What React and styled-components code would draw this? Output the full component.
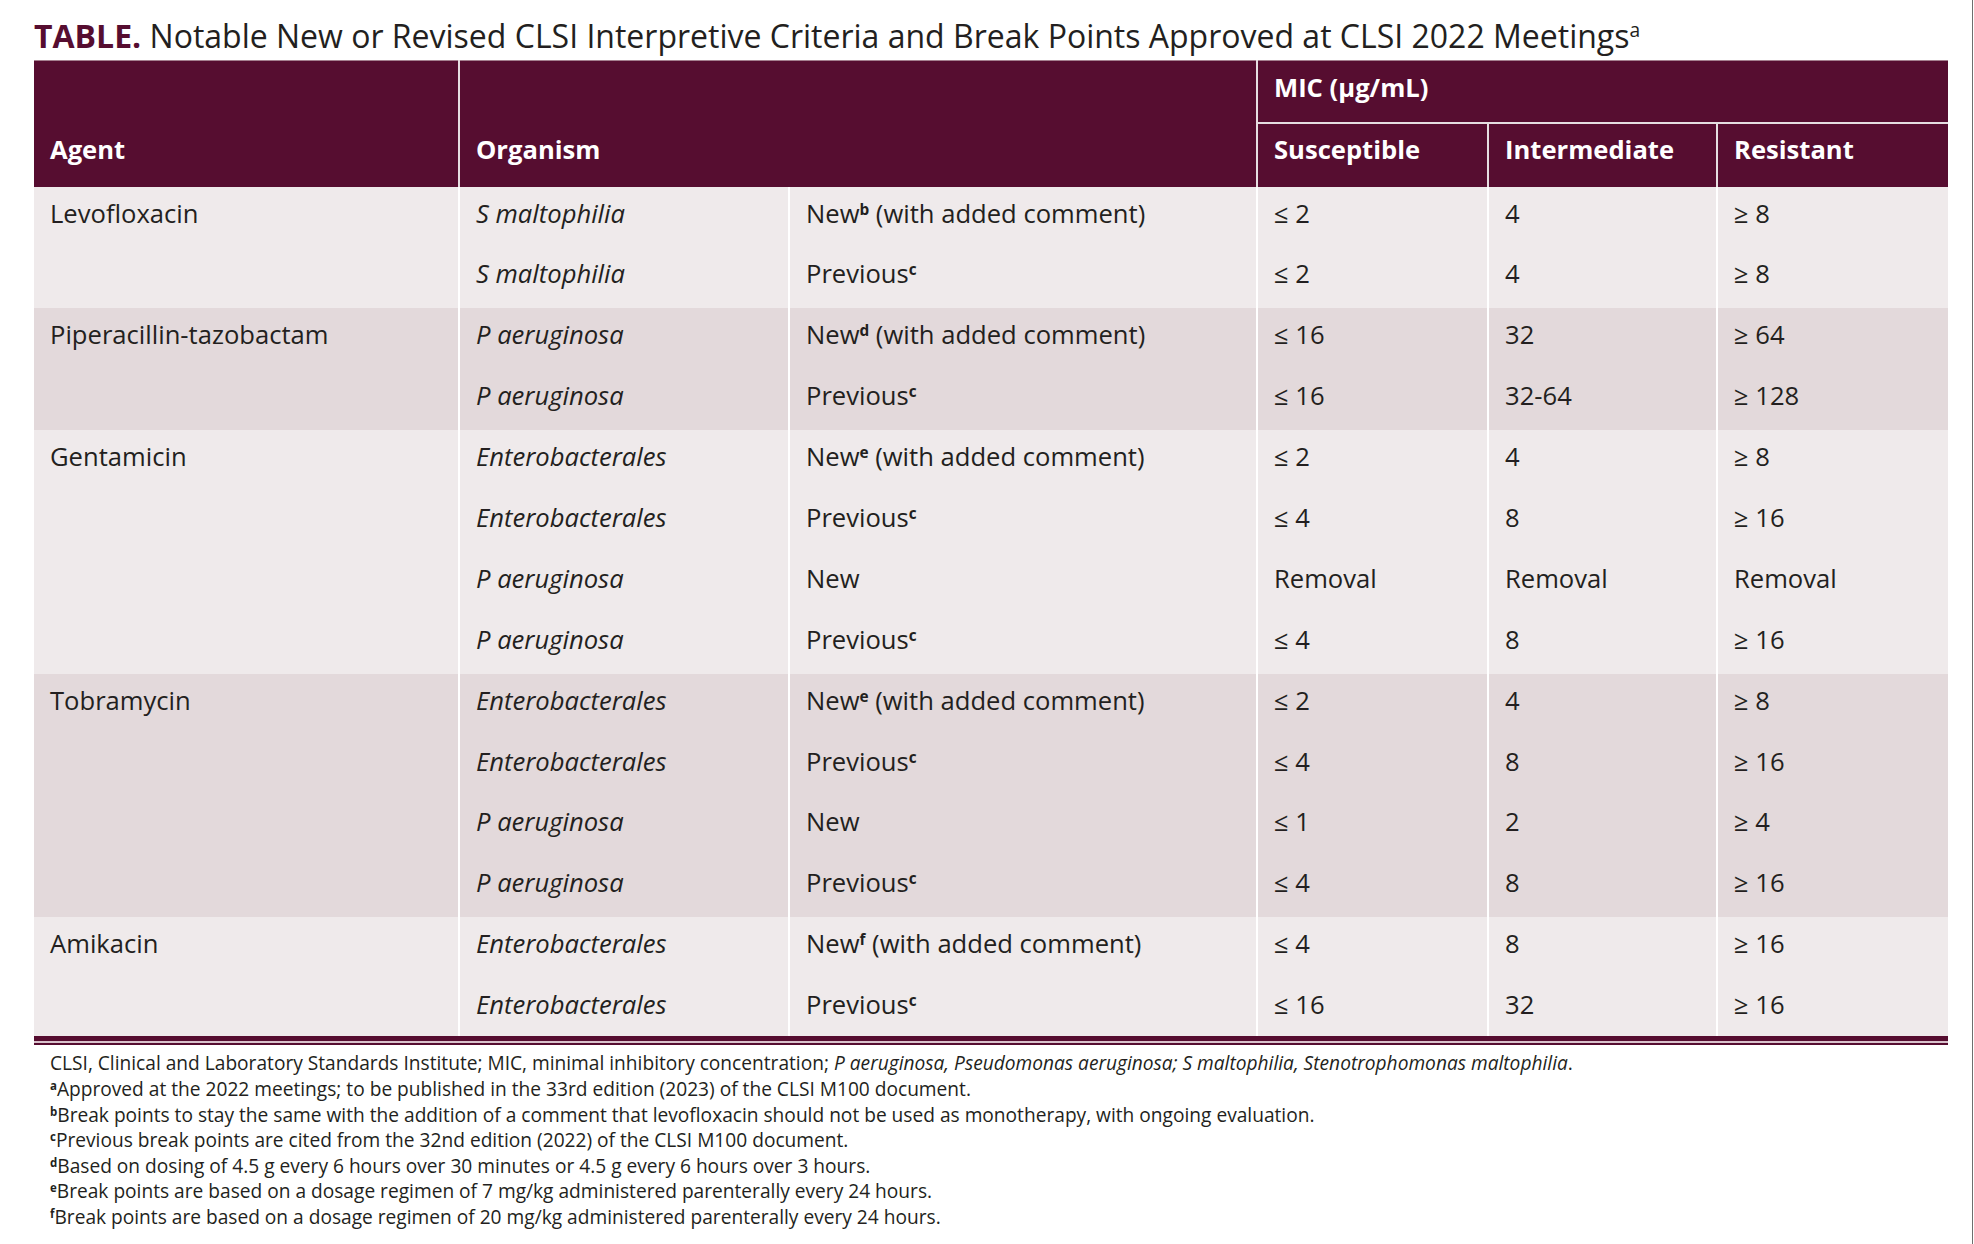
import React from "react";
import styled, { createGlobalStyle } from "styled-components";

const MAROON = "#560d30";
const INK = "#231f20";

const Global = createGlobalStyle`
  html, body { margin: 0; padding: 0; background: #ffffff; }
  body { font-family: "Open Sans", "Liberation Sans", sans-serif; color: ${INK}; }
`;

const Page = styled.div`
  box-sizing: border-box;
  width: 1973px;
  min-height: 1244px;
  border-right: 1px solid #6e6e6e;
  padding: 16px 0 0 34px;
`;

const Title = styled.h1`
  margin: 0 0 4px 0;
  font-size: 32px;
  line-height: 40px;
  font-weight: 400;
  color: ${INK};
  white-space: nowrap;
`;

const TitleLabel = styled.span`
  font-weight: 700;
  color: ${MAROON};
`;

const Sup = styled.sup`
  font-size: 0.6em;
  line-height: 0;
  vertical-align: 0.55em;
  font-weight: ${(p) => (p.$bold ? 700 : 400)};
`;

const Table = styled.table`
  width: 1914px;
  border-collapse: collapse;
  table-layout: fixed;
  font-size: 25.6px;
`;

const HeadRow = styled.tr`
  height: ${(p) => p.$h}px;
  background: ${MAROON};
`;

const Th = styled.th`
  padding: 0 16px ${(p) => p.$pb || 0}px 16px;
  text-align: left;
  font-size: 25.6px;
  font-weight: 700;
  color: #ffffff;
  line-height: 34px;
  vertical-align: ${(p) => p.$valign || "middle"};
  border-left: ${(p) => (p.$noLeft ? "none" : "2px solid #e6dde1")};
  border-bottom: ${(p) => (p.$divider ? "2px solid #e6dde1" : "none")};
  border-top: 1px solid #a5808f;
`;

const BodyRow = styled.tr`
  height: 60.9px;
  background: ${(p) => (p.$dark ? "#e3d9db" : "#efeaeb")};
`;

const Td = styled.td`
  padding: 10px 16px 0 16px;
  vertical-align: top;
  line-height: 34px;
  font-weight: 400;
  font-style: ${(p) => (p.$italic ? "italic" : "normal")};
  color: ${INK};
  border-left: ${(p) => (p.$first ? "none" : "2px solid #ffffff")};
  border-bottom: ${(p) => (p.$last ? `5px solid ${MAROON}` : "none")};
  white-space: nowrap;
`;

const RuleGap = styled.div`
  width: 1914px;
  height: 2px;
  background: #d9c3cc;
`;

const Rule = styled.div`
  width: 1914px;
  height: 2px;
  background: ${MAROON};
`;

const Notes = styled.div`
  padding: 6px 0 0 16px;
  font-size: 19.15px;
  line-height: 25.6px;
  color: ${INK};
`;

const Note = styled.div`
  white-space: nowrap;
`;

const Em = styled.i`
  font-style: italic;
`;

const groups = [
  {
    agent: "Levofloxacin",
    rows: [
      ["S maltophilia", ["New", "b", " (with added comment)"], "≤ 2", "4", "≥ 8"],
      ["S maltophilia", ["Previous", "c", ""], "≤ 2", "4", "≥ 8"],
    ],
  },
  {
    agent: "Piperacillin-tazobactam",
    rows: [
      ["P aeruginosa", ["New", "d", " (with added comment)"], "≤ 16", "32", "≥ 64"],
      ["P aeruginosa", ["Previous", "c", ""], "≤ 16", "32-64", "≥ 128"],
    ],
  },
  {
    agent: "Gentamicin",
    rows: [
      ["Enterobacterales", ["New", "e", " (with added comment)"], "≤ 2", "4", "≥ 8"],
      ["Enterobacterales", ["Previous", "c", ""], "≤ 4", "8", "≥ 16"],
      ["P aeruginosa", ["New", "", ""], "Removal", "Removal", "Removal"],
      ["P aeruginosa", ["Previous", "c", ""], "≤ 4", "8", "≥ 16"],
    ],
  },
  {
    agent: "Tobramycin",
    rows: [
      ["Enterobacterales", ["New", "e", " (with added comment)"], "≤ 2", "4", "≥ 8"],
      ["Enterobacterales", ["Previous", "c", ""], "≤ 4", "8", "≥ 16"],
      ["P aeruginosa", ["New", "", ""], "≤ 1", "2", "≥ 4"],
      ["P aeruginosa", ["Previous", "c", ""], "≤ 4", "8", "≥ 16"],
    ],
  },
  {
    agent: "Amikacin",
    rows: [
      ["Enterobacterales", ["New", "f", " (with added comment)"], "≤ 4", "8", "≥ 16"],
      ["Enterobacterales", ["Previous", "c", ""], "≤ 16", "32", "≥ 16"],
    ],
  },
];

const notes = [
  ["a", "Approved at the 2022 meetings; to be published in the 33rd edition (2023) of the CLSI M100 document."],
  ["b", "Break points to stay the same with the addition of a comment that levofloxacin should not be used as monotherapy, with ongoing evaluation."],
  ["c", "Previous break points are cited from the 32nd edition (2022) of the CLSI M100 document."],
  ["d", "Based on dosing of 4.5 g every 6 hours over 30 minutes or 4.5 g every 6 hours over 3 hours."],
  ["e", "Break points are based on a dosage regimen of 7 mg/kg administered parenterally every 24 hours."],
  ["f", "Break points are based on a dosage regimen of 20 mg/kg administered parenterally every 24 hours."],
];

export default function App() {
  return (
    <>
      <Global />
      <Page>
        <Title>
          <TitleLabel>TABLE.</TitleLabel> Notable New or Revised CLSI Interpretive Criteria and Break Points Approved at CLSI 2022 Meetings
          <Sup>a</Sup>
        </Title>
        <Table>
          <colgroup>
            <col style={{ width: 425 }} />
            <col style={{ width: 330 }} />
            <col style={{ width: 468 }} />
            <col style={{ width: 231 }} />
            <col style={{ width: 229 }} />
            <col style={{ width: 231 }} />
          </colgroup>
          <thead>
            <HeadRow $h={62}>
              <Th rowSpan={2} $noLeft $valign="bottom" $pb={20}>Agent</Th>
              <Th rowSpan={2} colSpan={2} $valign="bottom" $pb={20}>Organism</Th>
              <Th colSpan={3} $divider $pb={6}>MIC (µg/mL)</Th>
            </HeadRow>
            <HeadRow $h={64}>
              <Th $pb={10}>Susceptible</Th>
              <Th $pb={10}>Intermediate</Th>
              <Th $pb={10}>Resistant</Th>
            </HeadRow>
          </thead>
          <tbody>
            {groups.map((g, gi) =>
              g.rows.map((r, ri) => {
                const last = gi === groups.length - 1 && ri === g.rows.length - 1;
                const lastGroup = gi === groups.length - 1;
                return (
                  <BodyRow key={`${gi}-${ri}`} $dark={gi % 2 === 1}>
                    {ri === 0 && (
                      <Td rowSpan={g.rows.length} $first $last={lastGroup}>
                        {g.agent}
                      </Td>
                    )}
                    <Td $italic $last={last}>{r[0]}</Td>
                    <Td $last={last}>
                      {r[1][0]}
                      {r[1][1] && <Sup $bold>{r[1][1]}</Sup>}
                      {r[1][2]}
                    </Td>
                    <Td $last={last}>{r[2]}</Td>
                    <Td $last={last}>{r[3]}</Td>
                    <Td $last={last}>{r[4]}</Td>
                  </BodyRow>
                );
              })
            )}
          </tbody>
        </Table>
        <RuleGap />
        <Rule />
        <Notes>
          <Note>
            CLSI, Clinical and Laboratory Standards Institute; MIC, minimal inhibitory concentration;{" "}
            <Em>P aeruginosa, Pseudomonas aeruginosa; S maltophilia, Stenotrophomonas maltophilia</Em>.
          </Note>
          {notes.map(([k, t]) => (
            <Note key={k}>
              <Sup $bold>{k}</Sup>
              {t}
            </Note>
          ))}
        </Notes>
      </Page>
    </>
  );
}
